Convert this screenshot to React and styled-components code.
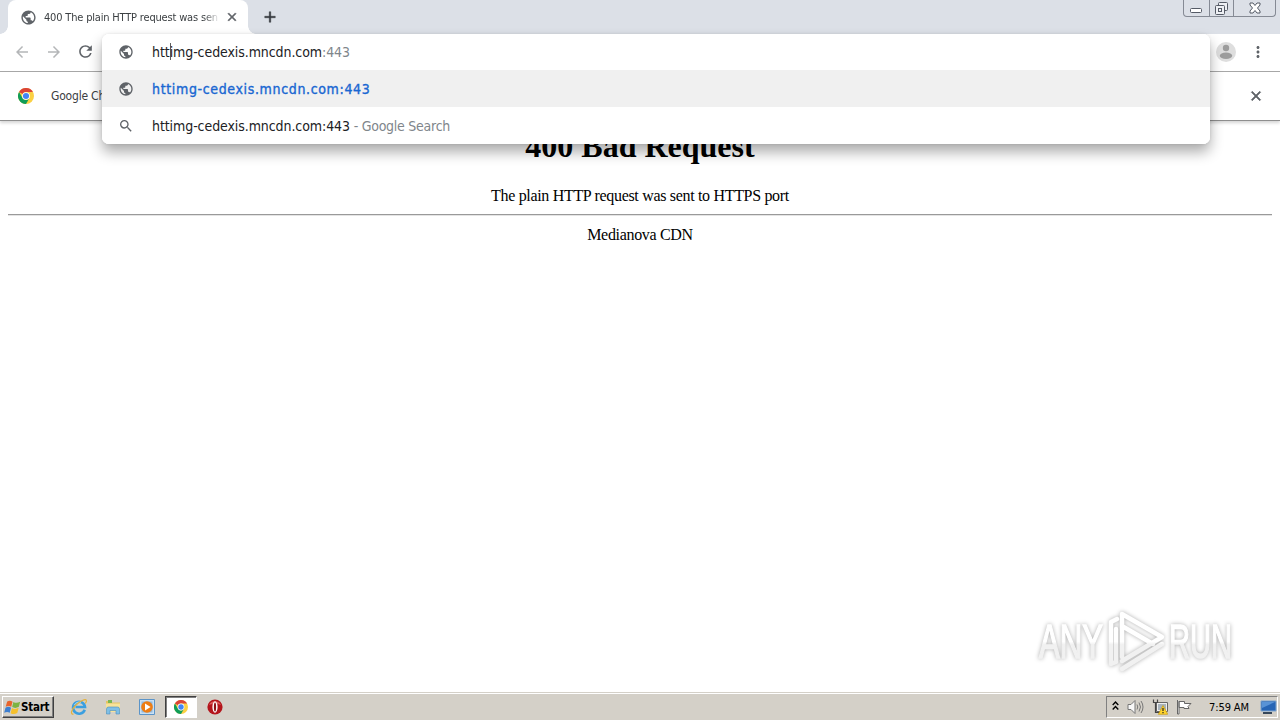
import React from 'react'
import styled, { createGlobalStyle, css } from 'styled-components'
import {
  MdAdd,
  MdArrowBack,
  MdArrowForward,
  MdClose,
  MdMoreVert,
  MdPublic,
  MdRefresh,
  MdSearch,
} from 'react-icons/md'

const GlobalStyle = createGlobalStyle`
  * {
    box-sizing: border-box;
  }

  body {
    margin: 0;
    overflow: hidden;
    background: #fff;
  }
`

const uiFont = css`
  font-family: 'DejaVu Sans Condensed', 'DejaVu Sans', sans-serif;
  font-stretch: condensed;
`

const Screen = styled.div`
  ${uiFont}
  position: relative;
  display: flex;
  flex-direction: column;
  width: 1280px;
  height: 720px;
  overflow: hidden;
`

const TabStrip = styled.header`
  display: flex;
  align-items: flex-start;
  height: 34px;
  flex: none;
  padding-left: 8px;
  background: #dce0e7;
`

const Tab = styled.div`
  position: relative;
  display: flex;
  align-items: center;
  width: 240px;
  height: 34px;
  padding: 0 9px 0 12px;
  border-radius: 8px 8px 0 0;
  background: #fff;
  color: #5f6368;

  &::before,
  &::after {
    content: '';
    position: absolute;
    bottom: 0;
    width: 8px;
    height: 8px;
  }

  &::before {
    left: -8px;
    background: radial-gradient(circle at 0 0, transparent 7.5px, #fff 8px);
  }

  &::after {
    right: -8px;
    background: radial-gradient(circle at 100% 0, transparent 7.5px, #fff 8px);
  }
`

const TabTitle = styled.span`
  flex: 1;
  margin: 0 6px 0 7px;
  overflow: hidden;
  white-space: nowrap;
  color: #3c4043;
  font-size: 11px;
  letter-spacing: ${({ $spacing }) => $spacing}px;
  mask-image: linear-gradient(to right, #000 160px, transparent 176px);
`

const CloseIcon = styled(MdClose)`
  path:last-child {
    stroke: currentColor;
    stroke-width: 1px;
  }
`

const AddIcon = styled(MdAdd)`
  path:last-child {
    stroke: currentColor;
    stroke-width: 0.6px;
  }
`

const NewTab = styled.div`
  display: flex;
  margin: 8px 0 0 13px;
  color: #33373c;
`

const WindowButtons = styled.div`
  display: flex;
  width: 93px;
  height: 17px;
  margin: 0 4px 0 auto;
  border: 1px solid #858a94;
  border-top: 0;
  border-radius: 0 0 4px 4px;
`

const WindowButton = styled.div`
  display: flex;
  align-items: center;
  justify-content: center;
  width: ${({ $width }) => $width}px;

  & + & {
    border-left: 1px solid #858a94;
  }
`

const Toolbar = styled.nav`
  display: flex;
  align-items: center;
  height: 38px;
  flex: none;
  padding: 0 13px 2px;
  border-bottom: 1px solid #a9a9a9;
  background: #fff;
  color: #5f6368;

  > svg {
    flex: none;
    margin-right: 14px;
  }

  > svg:last-child {
    margin-right: 0;
  }
`

const RefreshIcon = styled(MdRefresh)`
  path:first-child {
    stroke: currentColor;
    stroke-width: 0.6px;
  }

  path[fill='none'] {
    stroke: none;
  }
`

const Muted = styled.span`
  display: flex;
  gap: 14px;
  margin-right: 13px;
  color: #b4b6b8;
`

const Profile = styled.svg`
  margin-left: auto;
  position: relative;
  left: 1px;
`

const InfoBar = styled.section`
  position: relative;
  display: flex;
  align-items: center;
  height: 49px;
  flex: none;
  padding: 0 16px 0 18px;
  border-bottom: 1px solid #8e8e8e;
  box-shadow: 0 2px 3px rgba(0, 0, 0, 0.17);
  background: #fff;
  color: #3c4043;
  font-size: 12px;
  letter-spacing: ${({ $spacing }) => $spacing}px;

  > span {
    margin-left: 17px;
  }

  > svg:last-child {
    margin-left: auto;
    color: #5f6368;
  }
`

const Page = styled.main`
  flex: 1;
  padding: 7px 8px 8px;
  text-align: center;
  color: #000;
  font-family: 'Liberation Serif', serif;
  font-size: 16px;
  line-height: 20px;
`

const Title = styled.h1`
  margin: 0;
  font-size: 32px;
  line-height: 37px;
`

const Message = styled.p`
  margin: ${({ $margin }) => $margin};
  letter-spacing: -0.32px;
`

const Rule = styled.hr`
  height: 2px;
  margin: 0;
  border: 0;
  border-top: 1px solid #9a9a9a;
  border-bottom: 1px solid #e4e4e4;
`

const OmniboxShadow = styled.div`
  position: absolute;
  top: 34px;
  left: 102px;
  width: 1108px;
  height: 110px;
  border-radius: 7px;
  box-shadow: 0 8px 14px rgba(0, 0, 0, 0.33), 0 0 3px rgba(0, 0, 0, 0.1);
`

// The suggestion list floats over the toolbar, the info bar and the page.
const Omnibox = styled.div`
  position: absolute;
  top: 34px;
  left: 102px;
  width: 1108px;
  height: 110px;
  overflow: hidden;
  border-radius: 7px;
  background: #fff;
`

const Suggestion = styled.div`
  display: flex;
  align-items: center;
  height: ${({ $height }) => $height || 37}px;
  padding-left: 16px;
  padding-bottom: ${({ $lift }) => $lift || 0}px;
  background: ${({ $active }) => ($active ? '#f0f0f0' : '#fff')};
  color: #5f6368;
`

const SuggestionText = styled.span`
  margin-left: 18px;
  white-space: pre;
  color: ${({ $link }) => ($link ? '#1967d2' : '#202124')};
  font-size: 14px;
  line-height: 18px;
  letter-spacing: ${({ $link }) => ($link ? '0.65px' : '-0.08px')};
  ${({ $link }) => $link && '-webkit-text-stroke: 0.35px #1967d2;'}
`

const Gray = styled.span`
  color: #80868b;
  letter-spacing: ${({ $spacing }) => $spacing || -0.08}px;
`

const Caret = styled.i`
  display: inline-block;
  width: 1px;
  height: 17px;
  margin: -2px -1px 0 0;
  vertical-align: -3px;
  background: #5c5e60;
`

const Watermark = styled.svg`
  position: absolute;
  left: 1026px;
  top: 602px;
  overflow: visible;
  filter: drop-shadow(0 0 2px rgba(0, 0, 0, 0.32));
`

const Taskbar = styled.footer`
  display: flex;
  align-items: center;
  height: 28px;
  flex: none;
  padding: 1px 2px 0;
  border-top: 1px solid #d4d0c8;
  box-shadow: inset 0 1px 0 #fff;
  background: #d4d0c8;
`

const StartButton = styled.div`
  display: flex;
  align-items: center;
  width: 52px;
  height: 22px;
  padding-left: 1px;
  border: 1px solid;
  border-color: #fff #404040 #404040 #fff;
  box-shadow: inset -1px -1px 0 #808080;
  color: #000;
  font-size: 11.5px;
  font-weight: bold;
  letter-spacing: -0.25px;
`

const Launchers = styled.div`
  display: flex;
  align-items: center;
  margin-left: 8px;
`

const Launcher = styled.div`
  display: flex;
  align-items: center;
  justify-content: center;
  width: ${({ $active }) => ($active ? 32 : 34)}px;
  height: 22px;
  margin: ${({ $active }) => ($active ? '0 1px' : 0)};
  ${({ $active }) =>
    $active &&
    css`
      border: 1px solid;
      border-color: #404040 #fff #fff #404040;
      box-shadow: inset 1px 1px 0 #808080;
      background: #fff;
    `}
`

const Tray = styled.div`
  display: flex;
  align-items: center;
  width: 172px;
  height: 22px;
  margin-left: auto;
  padding-left: 5px;
  border: 1px solid;
  border-color: #808080 #fff #fff #808080;
  color: #000;
  font-size: 11px;

  > svg {
    flex: none;
    margin-right: 8px;
  }

  > svg:last-child {
    margin-right: 0;
  }
`

const Clock = styled.span`
  flex: 1;
  padding-left: 9px;
  white-space: nowrap;
  letter-spacing: -0.1px;
`

const ChromeIcon = ({ size }) => (
  <svg width={size} height={size} viewBox="0 0 24 24">
    <circle cx="12" cy="12" r="12" fill="#fbd043" />
    <path d="M1.6 6A12 12 0 0 1 22.4 6H12a6 6 0 0 0-5.2 3z" fill="#db4437" />
    <path d="M1.6 6a12 12 0 0 0 10.4 18l5.2-9a6 6 0 0 1-10.4 0z" fill="#0f9d58" />
    <circle cx="12" cy="12" r="5.8" fill="#fff" />
    <circle cx="12" cy="12" r="4.6" fill="#4285f4" />
  </svg>
)

const WindowsFlag = () => (
  <svg width="17" height="17" viewBox="0 0 16 16">
    <path d="M3 2.400C5 1 6.600 1.500 8 2.500L6.800 7.300C5.200 6.300 3.500 6.200 1.600 7.300z" fill="#e8642b" />
    <path d="M8.800 2.800c2 1.200 4 1.100 6.400-.2L14 7.400c-2.300 1.300-4.500 1.200-6.300.2z" fill="#7cb342" />
    <path d="M1.400 8.200c2-1.200 3.600-1 5.200 0L5.400 13C3.700 12 2.200 12 .2 13z" fill="#3d7fd0" />
    <path d="M7.500 8.500c2 1.100 4 1.100 6.300-.2l-1.300 4.900c-2.300 1.300-4.500 1.200-6.300.1z" fill="#f5c02c" />
  </svg>
)

const ExplorerIcon = () => (
  <svg width="18" height="18" viewBox="0 0 18 18" fill="none">
    <path d="M14.700 11.800A6 6 0 1 1 15 9H5.500" stroke="#3b9fe0" strokeWidth="2.600" />
    <path d="M4.300 7.200A5.200 5.200 0 0 1 11 4.400" stroke="#a6dcf7" strokeWidth="1" />
    <path d="M3.500 16.200C.2 16.500 1 12 5.500 7.500S15.500.6 16.300 2.200c.4.800 0 2-1 3.300" stroke="#e5b13a" strokeWidth="1.200" />
  </svg>
)

const FolderIcon = () => (
  <svg width="16" height="16" viewBox="0 0 16 16">
    <path d="M1 2h5l1 1.500h8V13H1z" fill="#e5c462" />
    <path d="M3 1h4v3H3z" fill="#79b651" />
    <path d="M1 4.500h14V13H1z" fill="#f7e39a" />
    <path d="M1.500 15V10q0-2 2-2h9q2 0 2 2v5H11v-3.500H5V15z" fill="#7fbfe6" stroke="#4a8ec0" strokeWidth=".6" />
  </svg>
)

const MediaIcon = () => (
  <svg width="16" height="16" viewBox="0 0 16 16">
    <path d="M.5.500h15v15H.5z" fill="#c9e0f3" stroke="#5b94c8" />
    <path d="M2.500 2.500h11v11h-11z" fill="#8fb9de" />
    <circle cx="8" cy="8" r="5.800" fill="#ed7d14" />
    <path d="m6 4.600 5.600 3.400L6 11.400z" fill="#fff" />
  </svg>
)

const OperaIcon = () => (
  <svg width="16" height="16" viewBox="0 0 16 16">
    <circle cx="8" cy="8" r="7.600" fill="#b4151c" />
    <path d="M2 6a6.500 6 0 0 1 12 0q-6-3-12 0" fill="#dc5a5a" />
    <ellipse cx="8" cy="8" rx="2.600" ry="5.700" fill="#fff" />
    <ellipse cx="8" cy="8" rx="1.100" ry="4.600" fill="#8c1015" />
  </svg>
)

const launchers = [
  { id: 'explorer', icon: <ExplorerIcon /> },
  { id: 'folder', icon: <FolderIcon /> },
  { id: 'media', icon: <MediaIcon /> },
  { id: 'chrome', icon: <ChromeIcon size={14} />, active: true },
  { id: 'opera', icon: <OperaIcon /> },
]

const TrayIcons = () => (
  <>
    <svg width="7" height="14" viewBox="0 0 7 14" fill="none" stroke="#000" strokeWidth="1.400">
      <path d="m.7 5 2.800-3 2.800 3M.7 9.500l2.800-3 2.800 3" />
    </svg>
    <svg width="17" height="16" viewBox="0 0 17 16" fill="none" stroke="#777">
      <path d="M1 5.500h3L8 1.500v13l-4-4H1z" fill="#f8f8f8" />
      <path d="M10 5.500q1.500 2.500 0 5M12 3.500q3 4.500 0 9M14 2q4 6 0 12" />
    </svg>
    <svg width="16" height="16" viewBox="0 0 16 16">
      <path d="M4.500 3.500h11v9h-11z" fill="#eee" stroke="#666" />
      <path d="M6 5h8v6H6z" fill="#a9b4bd" />
      <path d="M1.500.500v3h4v-3M3.500 4v9.500h5" fill="none" stroke="#444" strokeWidth="1.200" />
      <path d="m11 6.500 4.700 8.800H6.300z" fill="#ffd52e" stroke="#c99b10" strokeWidth=".7" />
      <path d="M11 9v3m0 1v1.200" stroke="#222" strokeWidth="1.200" />
    </svg>
    <svg width="16" height="16" viewBox="0 0 16 16" fill="#fff" stroke="#666">
      <path d="M1.500 1v14h1.500V2M3 2.500h5.500v2h6.500l-3 3 1 2H8V8.500H3z" />
    </svg>
  </>
)

const App = () => (
  <>
    <GlobalStyle />
    <Screen>
      <TabStrip>
        <Tab>
          <MdPublic size={17} />
          <TabTitle $spacing={-0.18}>400 The plain HTTP request was sen</TabTitle>
          <CloseIcon size={14} />
        </Tab>
        <NewTab>
          <AddIcon size={18} />
        </NewTab>
        <WindowButtons>
          <WindowButton $width={25}>
            <svg width="12" height="17" viewBox="0 0 12 17">
              <rect x=".5" y="8.500" width="11" height="4" rx="1" fill="#fff" stroke="#555b66" />
            </svg>
          </WindowButton>
          <WindowButton $width={25}>
            <svg width="13" height="15" viewBox="0 0 13 15" fill="#eef0f4" stroke="#555b66">
              <rect x="3.500" y="1.500" width="9" height="8" rx="1" />
              <rect x=".5" y="4.500" width="9" height="9" rx="1" />
              <rect x="3.500" y="7.500" width="3" height="3" />
            </svg>
          </WindowButton>
          <WindowButton $width={42}>
            <svg width="12" height="12" viewBox="0 0 12 12">
              <path d="M1 1h3l2 2.500L8 1h3v2L8.500 6 11 9v2H8L6 8.500 4 11H1V9l2.500-3L1 3z" fill="#fff" stroke="#555b66" />
            </svg>
          </WindowButton>
        </WindowButtons>
      </TabStrip>
      <Toolbar>
        <Muted>
          <MdArrowBack size={18} />
          <MdArrowForward size={18} />
        </Muted>
        <RefreshIcon size={19} />
        <Profile width="20" height="20" viewBox="0 0 20 20">
          <circle cx="10" cy="10" r="10" fill="#dedede" />
          <circle cx="10" cy="6" r="3.200" fill="#9c9c9c" />
          <ellipse cx="10" cy="13.700" rx="6.200" ry="3.200" fill="#9c9c9c" />
        </Profile>
        <MdMoreVert size={18} />
      </Toolbar>
      <InfoBar $spacing={-0.2}>
        <ChromeIcon size={16} />
        <span>Google Chrome</span>
        <CloseIcon size={16} />
      </InfoBar>
      <OmniboxShadow />
      <Page>
        <Title>400 Bad Request</Title>
        <Message $margin="21px 0 8px">The plain HTTP request was sent to HTTPS port</Message>
        <Rule />
        <Message $margin="9px 0 0">Medianova CDN</Message>
      </Page>
      <Omnibox>
        <Suggestion $height={36} $lift={1}>
          <MdPublic size={16} />
          <SuggestionText>
            htt<Caret />img-cedexis.mncdn.com<Gray>:443</Gray>
          </SuggestionText>
        </Suggestion>
        <Suggestion $active>
          <MdPublic size={16} />
          <SuggestionText $link>httimg-cedexis.mncdn.com:443</SuggestionText>
        </Suggestion>
        <Suggestion>
          <MdSearch size={16} />
          <SuggestionText>
            httimg-cedexis.mncdn.com:443<Gray $spacing={-0.26}> - Google Search</Gray>
          </SuggestionText>
        </Suggestion>
      </Omnibox>
      <Watermark width="220" height="76" viewBox="0 0 220 76">
        <defs>
          <linearGradient id="fade" x1="0" y1="0" x2="0" y2="76" gradientUnits="userSpaceOnUse">
            <stop offset=".52" stopColor="#fff" />
            <stop offset=".56" stopColor="#f1f1f1" />
          </linearGradient>
        </defs>
        <g fill="url(#fade)" stroke="url(#fade)" strokeWidth="1.500" fontFamily="Liberation Sans, sans-serif" fontSize="49">
          <text x="13" y="56" textLength="64" lengthAdjust="spacingAndGlyphs">ANY</text>
          <text x="143" y="56" textLength="63" lengthAdjust="spacingAndGlyphs">RUN</text>
        </g>
        <g fill="none" stroke="url(#fade)" strokeWidth="4.500" strokeLinejoin="round" strokeLinecap="round">
          <path d="M96 55V12l40 23-40 24M96 24l31 18" />
          <path d="M91 17l-6 3v42l5-2V27M96 67l40-25" />
        </g>
      </Watermark>
      <Taskbar>
        <StartButton>
          <WindowsFlag />
          Start
        </StartButton>
        <Launchers>
          {launchers.map(({ id, icon, active }) => (
            <Launcher key={id} $active={active}>{icon}</Launcher>
          ))}
        </Launchers>
        <Tray>
          <TrayIcons />
          <Clock>7:59 AM</Clock>
          <svg width="17" height="15" viewBox="0 0 17 15">
            <path d="M1 1h15v10H1z" fill="#2765b5" stroke="#7fa5cf" />
            <path d="M2 2h13L2 8z" fill="#5993d6" />
            <path d="M3 13h9" stroke="#36475a" strokeWidth="2" />
          </svg>
        </Tray>
      </Taskbar>
    </Screen>
  </>
)

export default App
